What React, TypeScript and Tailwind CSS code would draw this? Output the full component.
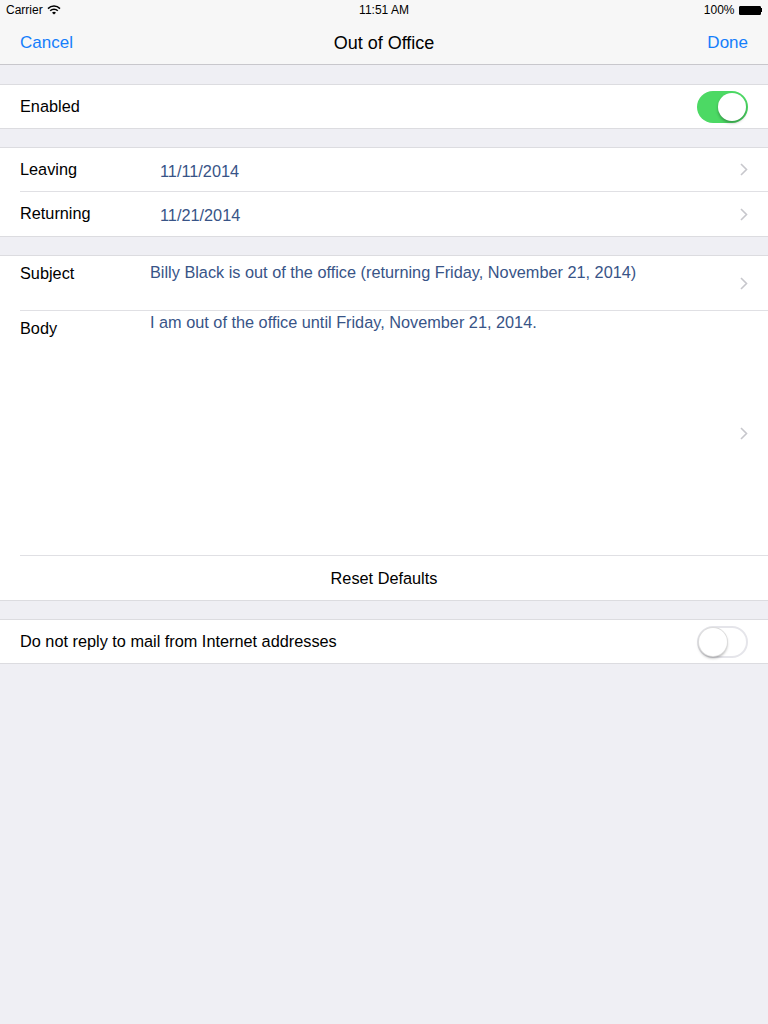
import React from "react";

function Chevron() {
  return (
    <svg width="8" height="13" viewBox="0 0 8 13" className="shrink-0">
      <path d="M1 1l5.5 5.5L1 12" fill="none" stroke="#c7c7cc" strokeWidth="1.6" />
    </svg>
  );
}

function Toggle({ on }: { on: boolean }) {
  return (
    <div
      className={
        on
          ? "flex h-[32px] w-[51px] items-center justify-end rounded-full bg-[#4cd964] p-[2px]"
          : "flex h-[32px] w-[51px] items-center justify-start rounded-full border-2 border-[#e5e5ea] bg-white"
      }
    >
      <div
        className={
          on
            ? "h-[28px] w-[28px] rounded-full bg-white shadow-[0_2px_3px_rgba(0,0,0,0.3)]"
            : "h-[28px] w-[28px] rounded-full bg-white shadow-[0_2px_3px_rgba(0,0,0,0.35)] ring-1 ring-[#dcdcdc]"
        }
      />
    </div>
  );
}

function Gap({ first }: { first?: boolean }) {
  return <div className={first ? "h-[20px] border-b border-[#dcdce0]" : "h-[19px] border-b border-[#dcdce0]"} />;
}

export default function App() {
  return (
    <div className="min-h-[1024px] bg-[#efeff4] font-['Liberation_Sans',Arial,sans-serif] text-black">
      <div className="bg-[#f7f7f7] border-b border-[#c8c7cc]">
        <div className="flex h-[20px] items-center justify-between px-[6px] text-[12px]">
          <div className="flex w-[100px] items-center gap-[4px]">
            <span>Carrier</span>
            <svg width="14" height="10" viewBox="0 0 14 10">
              <path d="M1 3.6a8.5 8.5 0 0 1 12 0" fill="none" stroke="#000" strokeWidth="1.5" />
              <path d="M3.2 5.8a5.3 5.3 0 0 1 7.6 0" fill="none" stroke="#000" strokeWidth="1.5" />
              <path d="M7 9.6l-2-1.9a2.8 2.8 0 0 1 4 0z" fill="#000" />
            </svg>
          </div>
          <span>11:51 AM</span>
          <div className="flex w-[100px] items-center justify-end gap-[4px]">
            <span>100%</span>
            <div className="flex items-center">
              <div className="h-[9px] w-[22px] rounded-[1px] border border-black bg-black p-px" />
              <div className="h-[4px] w-[1.5px] bg-black" />
            </div>
          </div>
        </div>
        <div className="flex h-[44px] items-center justify-between px-[20px] pt-[2px] text-[17px]">
          <span className="w-[100px] text-[#157efb]">Cancel</span>
          <span className="text-[18px]">Out of Office</span>
          <span className="w-[100px] text-right text-[#157efb]">Done</span>
        </div>
      </div>

      <Gap first />
      <div className="flex h-[44px] items-center justify-between border-b border-[#dcdce0] bg-white pl-[20px] pr-[20px] text-[16.3px]">
        <span>Enabled</span>
        <Toggle on />
      </div>

      <Gap />
      <div className="border-b border-[#dcdce0] bg-white text-[16.3px]">
        <div className="flex h-[43px] items-center pr-[20px]">
          <span className="ml-[20px] w-[140px] -mt-[1px]">Leaving</span>
          <span className="flex-1 text-[#385487] mt-[3px]">11/11/2014</span>
          <Chevron />
        </div>
        <div className="ml-[20px] h-px bg-[#e0e0e4]" />
        <div className="flex h-[44px] items-center pr-[20px]">
          <span className="ml-[20px] w-[140px] -mt-[1px]">Returning</span>
          <span className="flex-1 text-[#385487] mt-[3px]">11/21/2014</span>
          <Chevron />
        </div>
      </div>

      <Gap />
      <div className="border-b border-[#dcdce0] bg-white text-[16.3px]">
        <div className="flex h-[54px] items-center pr-[20px]">
          <span className="ml-[20px] w-[130px] self-start pt-[5px]">Subject</span>
          <span className="flex-1 self-start pt-[4px] text-[#385487]">
            Billy Black is out of the office (returning Friday, November 21, 2014)
          </span>
          <Chevron />
        </div>
        <div className="ml-[20px] h-px bg-[#e0e0e4]" />
        <div className="flex h-[244px] items-center pr-[20px]">
          <span className="ml-[20px] w-[130px] self-start pt-[5px]">Body</span>
          <span className="flex-1 self-start -mt-[1px] text-[#385487]">
            I am out of the office until Friday, November 21, 2014.
          </span>
          <Chevron />
        </div>
        <div className="ml-[20px] h-px bg-[#e0e0e4]" />
        <div className="flex h-[44px] items-center justify-center">
          <span>Reset Defaults</span>
        </div>
      </div>

      <Gap />
      <div className="flex h-[44px] items-center justify-between border-b border-[#dcdce0] bg-white px-[20px] text-[16.3px]">
        <span>Do not reply to mail from Internet addresses</span>
        <Toggle on={false} />
      </div>
    </div>
  );
}
